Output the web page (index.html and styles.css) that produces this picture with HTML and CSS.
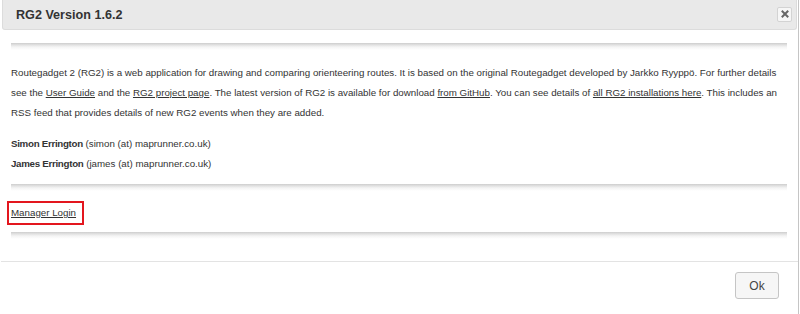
FILE: index.html
```html
<!DOCTYPE html>
<html lang="en">
<head>
    <meta charset="UTF-8">
    <title>RG2 Version 1.6.2</title>
    <link rel="stylesheet" href="styles.css">
</head>
<body>
    <div class="dialog">
        <div class="titlebar">
            <span class="title">RG2 Version 1.6.2</span>
            <button class="close-btn" title="Close">
                <svg width="8" height="8" viewBox="0 0 8 8">
                    <path d="M1.5 1.5 L6.5 6.5 M6.5 1.5 L1.5 6.5" stroke="#666" stroke-width="2" stroke-linecap="square"/>
                </svg>
            </button>
        </div>

        <div class="dialog-content">
            <div class="rule"></div>
            <p class="about">
                Routegadget 2 (RG2) is a web application for drawing and comparing orienteering routes. It is based on the original Routegadget developed by Jarkko Ryyppö. For further details<br>
                see the <a href="#">User Guide</a> and the <a href="#">RG2 project page</a>. The latest version of RG2 is available for download <a href="#">from GitHub</a>. You can see details of <a href="#">all RG2 installations here</a>. This includes an<br>
                RSS feed that provides details of new RG2 events when they are added.
            </p>
            <p class="authors">
                <b>Simon Errington</b> (simon (at) maprunner.co.uk)<br>
                <b>James Errington</b> (james (at) maprunner.co.uk)
            </p>
            <div class="rule"></div>
            <div class="login-row">
                <span class="highlight"><a href="#">Manager Login</a></span>
            </div>
            <div class="rule"></div>
        </div>

        <div class="buttonpane">
            <button class="ok-btn">Ok</button>
        </div>
    </div>
</body>
</html>
```

FILE: styles.css
```css
body {
    margin: 0;
    padding: 0;
    background: #fff;
    font-family: "Liberation Sans", Arial, sans-serif;
    font-size: 9.75px;
    color: #333;
}

.dialog {
    width: 799px;
    height: 314px;
    box-sizing: border-box;
    border-right: 1px solid #c5c5c5;
    background: #fff;
}

.titlebar {
    height: 29px;
    margin: 0 1px 0 2px;
    padding: 0 4px 0 13px;
    display: flex;
    align-items: center;
    justify-content: space-between;
    background: #e9e9e9;
    border: 1px solid #dcdcdc;
    border-top: 0;
    border-radius: 0 0 3px 3px;
}

.title {
    font-size: 12.6px;
    font-weight: bold;
    color: #333;
    padding-top: 1px;
}

.close-btn {
    width: 15px;
    height: 15px;
    padding: 0;
    margin-top: -1px;
    display: flex;
    align-items: center;
    justify-content: center;
    background: #f6f6f6;
    border: 1px solid #d3d3d3;
    border-radius: 2px;
}

.dialog-content {
    padding: 13px 11px 22px;
}

.rule {
    height: 7px;
    background: linear-gradient(to bottom, #cdcdcd 0, #e2e2e2 2px, #f4f4f4 4px, #fff 7px);
}

.about {
    margin: 13px 0 11px;
    line-height: 20px;
}

.authors {
    margin: 0 0 10px;
    line-height: 20px;
}

.authors b {
    letter-spacing: -0.3px;
}

a {
    color: #333;
    text-decoration: underline;
}

.login-row {
    display: flex;
    margin: 10px 0 7px;
}

.highlight {
    display: inline-block;
    margin-left: -4px;
    padding: 2px 6px 3px 2px;
    line-height: 15px;
    border: 2px solid #e3161e;
}

.buttonpane {
    border-top: 1px solid #e3e3e3;
    margin-left: 1px;
    padding: 10px 19px 0 0;
    display: flex;
    justify-content: flex-end;
}

.ok-btn {
    width: 44px;
    height: 27px;
    padding: 0;
    font-family: "Liberation Sans", Arial, sans-serif;
    font-size: 12px;
    color: #454545;
    background: #f6f6f6;
    border: 1px solid #c5c5c5;
    border-radius: 3px;
}
```
